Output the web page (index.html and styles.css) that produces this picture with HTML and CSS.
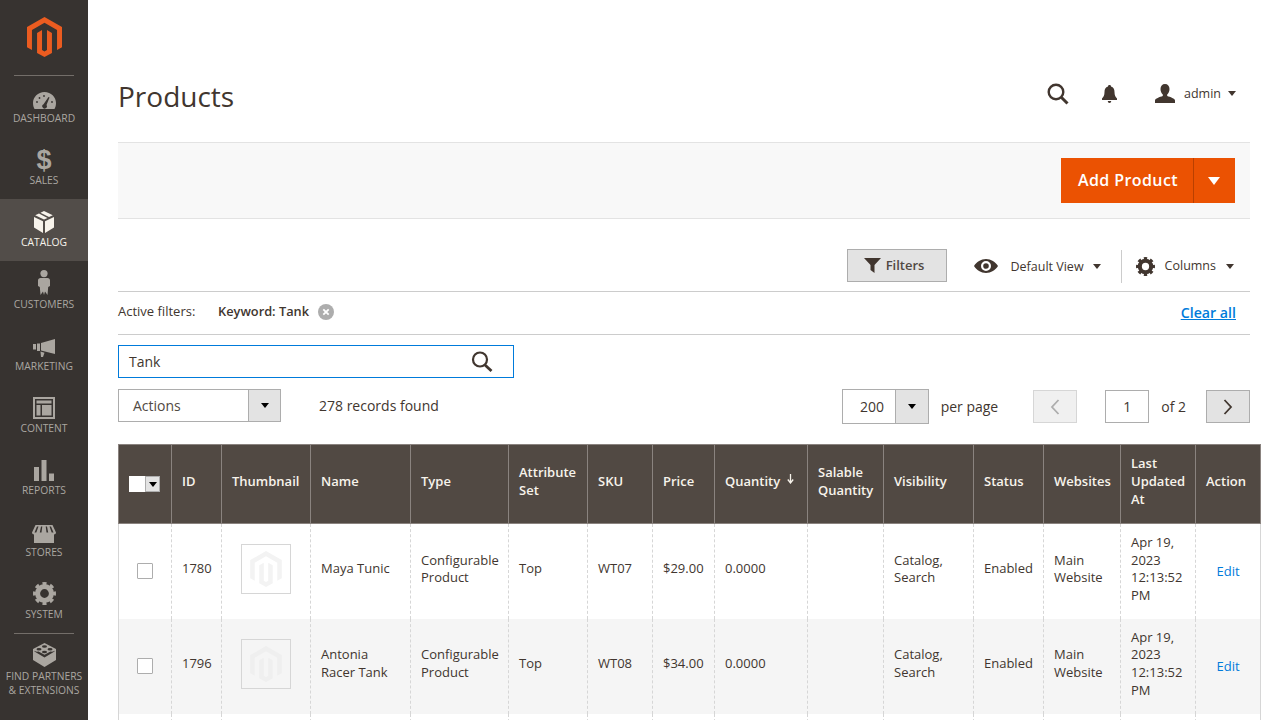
FILE: index.html
```html
<!DOCTYPE html>
<html lang="en">
<head>
    <meta charset="UTF-8">
    <title>Products</title>
    <link rel="stylesheet" href="styles.css">
</head>
<body>
    <div class="layout">
        <nav class="sidebar">
            <div class="logo">
                <svg width="35" height="40" viewBox="0 0 24 27.4"><path fill="#eb5c20" d="M12 0 0 6.9v13.8l3.4 1.9V8.9L12 4l8.6 4.9v13.7l3.4-1.9V6.9zM13.7 22.6l-1.7 1-1.7-1V8.9L6.9 10.9v13.7l5.1 2.8 5.1-2.8V10.9l-3.4-2z"/></svg>
            </div>
            <a class="nav-item">
                <svg class="nav-icon" width="23" height="17" viewBox="0 0 23 17"><path d="M11.5 0C5 0 0 5 0 11c0 2.2.5 4.2 1.5 6h20c1-1.8 1.500-3.800 1.500-6C23 5 18 0 11.500 0zM16.500 5.500l-3 7.500a2.300 2.300 0 1 1-3-.8l5-7.300z"/><circle cx="4" cy="10" r=".9" fill="#373330"/><circle cx="6.5" cy="6" r=".9" fill="#373330"/><circle cx="11" cy="4" r=".9" fill="#373330"/><circle cx="19" cy="10" r=".9" fill="#373330"/></svg>
                <span>Dashboard</span>
            </a>
            <a class="nav-item">
                <span class="nav-dollar">$</span>
                <span>Sales</span>
            </a>
            <a class="nav-item active">
                <svg class="nav-icon" width="20" height="22" viewBox="0 0 20 22"><path d="M10 0 6.5 1.700l8.500 4.400 3.800-1.900zM5 2.500 1.200 4.300l8.800 4.300 3.500-1.700zM0 6v10.500L9 22V10.300zM20 6l-9 4.300V22l9-5.500z"/></svg>
                <span>Catalog</span>
            </a>
            <a class="nav-item">
                <svg class="nav-icon" width="12" height="25" viewBox="0 0 12 25"><circle cx="6" cy="3.6" r="3.6"/><path d="M2.500 8h7C11 8 12 9 12 10.500V16l-1.800 1-.7 8-2.500-3.500L6 25l-1-3.500L2.500 25l-.7-8L0 16v-5.500C0 9 1 8 2.500 8z"/></svg>
                <span>Customers</span>
            </a>
            <a class="nav-item">
                <svg class="nav-icon" width="22" height="18" viewBox="0 0 22 18"><path d="M22 0v15L8 11.500V4zM0 5h3v5.500H0zM4 4.500h3v7.500H4zM7.500 12.500l4 1.200-1.500 4.300H8z"/></svg>
                <span>Marketing</span>
            </a>
            <a class="nav-item">
                <svg class="nav-icon" width="22" height="22" viewBox="0 0 22 22"><path fill-rule="evenodd" d="M0 0h22v22H0zM2 2v18h18V2zM3.500 3.500h15v3h-15zM3.500 8h4v10.500h-4zM9 8h9.500v10.500H9z"/></svg>
                <span>Content</span>
            </a>
            <a class="nav-item">
                <svg class="nav-icon" width="20" height="21" viewBox="0 0 20 21"><path d="M0 7h5v14H0zM7.500 0h5v21h-5zM15 13.500h5V21h-5z"/></svg>
                <span>Reports</span>
            </a>
            <a class="nav-item">
                <svg class="nav-icon" width="24" height="18" viewBox="0 0 24 18"><path d="M3.500 0h17L24 7.500c0 1.300-1 2-2 2v8.500H2V9.500c-1 0-2-.7-2-2zM5 1.500 2.500 7.500h1.800L6.500 1.500zM9 1.500 7.800 7.500h1.700l.8-6zM13.700 1.500l.8 6h1.700L15 1.500zM17.500 1.500l2.200 6h1.800L19 1.500z"/></svg>
                <span>Stores</span>
            </a>
            <a class="nav-item">
                <svg class="nav-icon gear" width="23" height="23" viewBox="-12 -12 24 24"><circle r="7.2" fill="none" stroke-width="5.2"/><circle r="10.2" fill="none" stroke-width="3.6" pathLength="8" stroke-dasharray=".52 .48" stroke-dashoffset=".26"/></svg>
                <span>System</span>
            </a>
            <a class="nav-item partners">
                <svg class="nav-icon" width="23" height="24" viewBox="0 0 23 24"><path d="M11.500 0 0 6v11l11.500 7L23 17V6zM11.500 14.500 1.500 8.500v-.8c1 .8 2.700 1.200 4 .8l6 3.300 6-3.300c1.300.4 3 0 4-.8v.8z"/><ellipse cx="11.5" cy="3.5" rx="2.5" ry="1.3" fill="#373330"/><ellipse cx="6" cy="6.3" rx="2.5" ry="1.3" fill="#373330"/><ellipse cx="17" cy="6.3" rx="2.5" ry="1.3" fill="#373330"/><ellipse cx="11.5" cy="9" rx="2.5" ry="1.3" fill="#373330"/></svg>
                <span>Find Partners &amp; Extensions</span>
            </a>
        </nav>

        <main class="main">
            <header class="page-header">
                <h1>Products</h1>
                <div class="header-tools">
                    <svg class="tool-search" width="22" height="22" viewBox="0 0 22 22"><circle cx="9" cy="9" r="7.3" fill="none" stroke="#41362f" stroke-width="2.4"/><path d="m14.500 14.500 6 6" stroke="#41362f" stroke-width="3"/></svg>
                    <svg class="tool-bell" width="15" height="18" viewBox="0 0 15 18"><path fill="#41362f" d="M7.500 0C8.500 0 9 .6 9 1.400 11.500 2 12.500 4 12.500 7c0 3.500 1 5 2.500 6.500V15H0v-1.500C1.500 12 2.500 10.500 2.500 7 2.500 4 3.500 2 6 1.400 6 .6 6.500 0 7.500 0zM5.800 16h3.400c0 1-.7 2-1.700 2s-1.700-1-1.700-2z"/></svg>
                    <div class="user-menu">
                        <svg width="20" height="19" viewBox="0 0 20 19"><path fill="#41362f" d="M10 0c2.800 0 4.500 2 4.500 5 0 2.500-1 4.500-2.300 5.500v1.500c3 1 7.800 2.500 7.800 4.500V19H0v-2.500c0-2 4.800-3.500 7.800-4.500v-1.500C6.500 9.500 5.500 7.500 5.500 5 5.500 2 7.200 0 10 0z"/></svg>
                        <span>admin</span>
                        <i class="caret"></i>
                    </div>
                </div>
            </header>

            <div class="page-actions">
                <div class="add-btn">
                    <span class="add-label">Add Product</span>
                    <span class="add-toggle"><i></i></span>
                </div>
            </div>

            <div class="grid-tools">
                <button class="filters-btn">
                    <svg width="17" height="15" viewBox="0 0 17 15"><path fill="#41362f" d="M0 0h17l-6.500 7v8l-4-3V7z"/></svg>
                    Filters
                </button>
                <div class="view-menu">
                    <svg width="24" height="14" viewBox="0 0 24 14"><path fill-rule="evenodd" fill="#41362f" d="M12 0c5 0 9.500 3 12 7-2.500 4-7 7-12 7S2.500 11 0 7c2.500-4 7-7 12-7zm0 2a5 5 0 1 0 0 10 5 5 0 0 0 0-10zm0 2.200a2.800 2.800 0 1 1 0 5.600 2.800 2.800 0 0 1 0-5.600z"/></svg>
                    <span>Default View</span>
                    <i class="caret small"></i>
                </div>
                <div class="columns-menu">
                    <svg class="gear dark" width="19" height="19" viewBox="-12 -12 24 24"><circle r="7.2" fill="none" stroke-width="5.2"/><circle r="10.2" fill="none" stroke-width="3.6" pathLength="8" stroke-dasharray=".52 .48" stroke-dashoffset=".26"/></svg>
                    <span>Columns</span>
                    <i class="caret small"></i>
                </div>
            </div>

            <div class="active-filters">
                <span class="af-label">Active filters:</span>
                <strong class="af-value">Keyword: Tank</strong>
                <svg class="af-remove" width="16" height="16" viewBox="0 0 16 16"><circle cx="8" cy="8" r="8" fill="#adadad"/><path d="m5.300 5.300 5.400 5.400m0-5.400-5.400 5.400" stroke="#fff" stroke-width="1.8"/></svg>
                <a class="clear-all">Clear all</a>
            </div>

            <div class="search-box">
                <span>Tank</span>
                <svg width="22" height="21" viewBox="0 0 22 21"><circle cx="9" cy="8.5" r="7" fill="none" stroke="#41362f" stroke-width="2.2"/><path d="m14 14 6.500 6" stroke="#41362f" stroke-width="2.8"/></svg>
            </div>

            <div class="list-bar">
                <div class="select actions-select">
                    <span class="select-value">Actions</span>
                    <span class="select-arrow"><i class="caret black"></i></span>
                </div>
                <span class="records">278 records found</span>
                <div class="pager">
                    <div class="select perpage-select">
                        <span class="select-value">200</span>
                        <span class="select-arrow"><i class="caret black"></i></span>
                    </div>
                    <span class="perpage-label">per page</span>
                    <button class="page-btn prev" disabled><svg width="10" height="16" viewBox="0 0 10 16"><path d="M8.500 1 2 8l6.500 7" fill="none" stroke="#adadad" stroke-width="1.8"/></svg></button>
                    <span class="page-input">1</span>
                    <span class="page-of">of 2</span>
                    <button class="page-btn next"><svg width="10" height="16" viewBox="0 0 10 16"><path d="M1.500 1 8 8l-6.500 7" fill="none" stroke="#41362f" stroke-width="1.8"/></svg></button>
                </div>
            </div>

            <table class="grid">
                <thead>
                    <tr>
                        <th class="c-check"><span class="mass-select"><span class="mass-box"></span><span class="mass-arrow"><i class="caret black"></i></span></span></th>
                        <th class="c-id">ID</th>
                        <th class="c-thumb">Thumbnail</th>
                        <th class="c-name">Name</th>
                        <th class="c-type">Type</th>
                        <th class="c-set">Attribute Set</th>
                        <th class="c-sku">SKU</th>
                        <th class="c-price">Price</th>
                        <th class="c-qty">Quantity <svg class="sort" width="7" height="10" viewBox="0 0 7 10"><path d="M3.500 0v8M.8 5.500l2.700 3.500 2.700-3.500" fill="none" stroke="#f7f3eb" stroke-width="1.3"/></svg></th>
                        <th class="c-salable">Salable Quantity</th>
                        <th class="c-vis">Visibility</th>
                        <th class="c-status">Status</th>
                        <th class="c-web">Websites</th>
                        <th class="c-date">Last Updated At</th>
                        <th class="c-action">Action</th>
                    </tr>
                </thead>
                <tbody>
                    <tr>
                        <td class="cell-check"><span class="checkbox"></span></td>
                        <td>1780</td>
                        <td class="cell-thumb"><span class="thumb"><svg width="32" height="36" viewBox="0 0 24 27.4"><path fill="#f3f3f3" d="M12 0 0 6.9v13.800l3.400 1.900V8.900L12 4l8.600 4.900v13.700l3.400-1.900V6.900zM13.700 22.600l-1.700 1-1.700-1V8.900L6.900 10.900v13.700l5.100 2.800 5.100-2.800V10.900l-3.400-2z"/></svg></span></td>
                        <td>Maya Tunic</td>
                        <td>Configurable Product</td>
                        <td>Top</td>
                        <td>WT07</td>
                        <td>$29.00</td>
                        <td>0.0000</td>
                        <td></td>
                        <td>Catalog, Search</td>
                        <td>Enabled</td>
                        <td>Main Website</td>
                        <td>Apr 19, 2023 12:13:52 PM</td>
                        <td class="cell-action"><a>Edit</a></td>
                    </tr>
                    <tr class="odd">
                        <td class="cell-check"><span class="checkbox"></span></td>
                        <td>1796</td>
                        <td class="cell-thumb"><span class="thumb"><svg width="32" height="36" viewBox="0 0 24 27.4"><path fill="#efefef" d="M12 0 0 6.9v13.800l3.400 1.900V8.900L12 4l8.600 4.900v13.700l3.400-1.900V6.900zM13.700 22.600l-1.700 1-1.700-1V8.900L6.900 10.900v13.700l5.100 2.800 5.100-2.800V10.900l-3.400-2z"/></svg></span></td>
                        <td>Antonia Racer Tank</td>
                        <td>Configurable Product</td>
                        <td>Top</td>
                        <td>WT08</td>
                        <td>$34.00</td>
                        <td>0.0000</td>
                        <td></td>
                        <td>Catalog, Search</td>
                        <td>Enabled</td>
                        <td>Main Website</td>
                        <td>Apr 19, 2023 12:13:52 PM</td>
                        <td class="cell-action"><a>Edit</a></td>
                    </tr>
                    <tr class="blank">
                        <td></td><td></td><td></td><td></td><td></td><td></td><td></td><td></td>
                        <td></td><td></td><td></td><td></td><td></td><td></td><td></td>
                    </tr>
                </tbody>
            </table>
        </main>
    </div>
</body>
</html>
```
FILE: styles.css
```css
html, body {
    height: 100%;
    overflow: hidden;
}
body {
    margin: 0;
    font-family: "Open Sans", sans-serif;
    font-size: 14px;
    color: #41362f;
    background-color: #fff;
}
i {
    display: inline-block;
}
.layout {
    display: flex;
    height: 720px;
}

/* sidebar */
.sidebar {
    flex: 0 0 88px;
    background-color: #373330;
    color: #aaa6a0;
}
.logo {
    height: 75px;
    box-sizing: border-box;
    padding-top: 17px;
    text-align: center;
    position: relative;
}
.logo::after, .partners::before {
    content: "";
    position: absolute;
    left: 14px;
    right: 14px;
    height: 1px;
    background-color: #736e69;
}
.logo::after {
    bottom: -1px;
}
.partners::before {
    top: 0;
}
.nav-item {
    position: relative;
    display: flex;
    flex-direction: column;
    align-items: center;
    justify-content: flex-end;
    height: 62px;
    box-sizing: border-box;
    padding-bottom: 12px;
    font-size: 10.3px;
    line-height: 14px;
    text-transform: uppercase;
    text-align: center;
}
.nav-icon {
    fill: #aaa6a0;
    margin-bottom: 2px;
}
.gear circle {
    stroke: #aaa6a0;
}
.gear.dark circle {
    stroke: #41362f;
}
.nav-dollar {
    font-family: "Liberation Sans", sans-serif;
    font-size: 27px;
    font-weight: bold;
    line-height: 26px;
}
.nav-item.active {
    background-color: #524d49;
    color: #f7f3eb;
}
.active .nav-icon {
    fill: #f7f3eb;
}
.partners {
    height: 67px;
    justify-content: flex-start;
    padding: 10px 5px 0;
}

/* top of page */
.main {
    flex: 1;
    min-width: 0;
    padding: 0 30px;
}
.page-header {
    display: flex;
    align-items: center;
    justify-content: space-between;
    height: 142px;
    padding-top: 52px;
    box-sizing: border-box;
}
h1 {
    margin: -2px 0 0;
    font-size: 28px;
    font-weight: 400;
    color: #41362f;
}
.header-tools {
    display: flex;
    align-items: center;
    margin: 0 14px 6px 0;
}
.tool-bell {
    margin-left: 33px;
}
.user-menu {
    display: flex;
    align-items: center;
    margin: -2px 0 0 38px;
    font-size: 12.5px;
    color: #41362f;
}
.user-menu span {
    margin: 0 7px 0 9px;
}
.caret {
    width: 0;
    height: 0;
    border-left: 4.5px solid transparent;
    border-right: 4.5px solid transparent;
    border-top: 5px solid #41362f;
}
.caret.small {
    border-left-width: 4px;
    border-right-width: 4px;
}
.caret.black {
    border-top-color: #000;
}
.page-actions {
    display: flex;
    justify-content: flex-end;
    padding: 15px;
    background-color: #f8f8f8;
    border-top: 1px solid #e3e3e3;
    border-bottom: 1px solid #e3e3e3;
}
.add-btn {
    display: flex;
    height: 45px;
    background-color: #eb5202;
    color: #fff;
    font-size: 16px;
    font-weight: 600;
    line-height: 45px;
}
.add-label {
    width: 115px;
    padding-left: 17px;
    letter-spacing: .4px;
    white-space: nowrap;
}
.add-toggle {
    display: flex;
    align-items: center;
    justify-content: center;
    width: 39px;
    padding-right: 2px;
    border-left: 1px solid #ba4000;
}
.add-toggle i {
    border-left: 6px solid transparent;
    border-right: 6px solid transparent;
    border-top: 8px solid #fff;
}

/* grid toolbar */
.grid-tools {
    display: flex;
    align-items: center;
    justify-content: flex-end;
    height: 73px;
    padding: 22px 16px 0 0;
    box-sizing: border-box;
    border-bottom: 1px solid #ccc;
    font-size: 12.5px;
}
.filters-btn {
    display: flex;
    align-items: center;
    justify-content: center;
    gap: 5px;
    width: 100px;
    height: 33px;
    margin-top: -2px;
    padding: 0 5px 0 0;
    background-color: #e3e3e3;
    border: 1px solid #adadad;
    font-family: inherit;
    font-size: 13px;
    font-weight: 600;
    color: #514943;
}
.view-menu, .columns-menu {
    display: flex;
    align-items: center;
}
.view-menu {
    margin-left: 27px;
    padding-right: 20px;
    height: 33px;
}
.view-menu span {
    margin: 0 9px 0 13px;
}
.columns-menu {
    height: 33px;
    padding-left: 14px;
    border-left: 1px solid #ccc;
}
.columns-menu span {
    margin: -2px 10px 0 10px;
}
.active-filters {
    display: flex;
    align-items: center;
    height: 40px;
    border-bottom: 1px solid #ccc;
    font-size: 13px;
    padding: 0 14px 2px 0;
}
.af-label {
    width: 100px;
    margin-top: -2px;
}
.af-value {
    margin: -2px 9px 0 0;
    font-size: 12.8px;
    font-weight: 600;
    color: #41362f;
}
.clear-all {
    margin-left: auto;
    color: #007bdb;
    font-size: 14.2px;
    font-weight: 600;
    text-decoration: underline;
}
.search-box {
    display: flex;
    align-items: center;
    justify-content: space-between;
    width: 396px;
    height: 33px;
    box-sizing: border-box;
    margin-top: 10px;
    padding: 0 20px 0 10px;
    border: 1px solid #007bdb;
    font-size: 14px;
}
.list-bar {
    display: flex;
    align-items: center;
    height: 35px;
    margin-top: 11px;
}
.select {
    display: flex;
    box-sizing: border-box;
    border: 1px solid #adadad;
    background-color: #fff;
}
.select-value {
    flex: 1;
}
.select-arrow {
    display: flex;
    align-items: center;
    justify-content: center;
    width: 32px;
    box-sizing: border-box;
    background-color: #e3e3e3;
    border-left: 1px solid #adadad;
}
.actions-select {
    width: 163px;
    height: 33px;
    margin-top: -2px;
    line-height: 31px;
    color: #514943;
}
.actions-select .select-value {
    padding-left: 14px;
}
.records {
    margin-left: 38px;
    margin-top: -2px;
}
.pager {
    display: flex;
    align-items: center;
    margin-left: auto;
}
.perpage-select {
    width: 87px;
    height: 35px;
    line-height: 33px;
}
.perpage-select .select-value {
    text-align: center;
    padding-left: 7px;
}
.perpage-select .select-arrow {
    width: 33px;
}
.perpage-label {
    margin: 0 35px 0 12px;
}
.page-btn {
    display: flex;
    align-items: center;
    justify-content: center;
    width: 44px;
    height: 33px;
    padding: 0;
    background-color: #e3e3e3;
    border: 1px solid #adadad;
}
.page-btn.prev {
    background-color: #f0f0f0;
    border-color: #d6d6d6;
}
.page-input {
    width: 44px;
    height: 33px;
    box-sizing: border-box;
    margin-left: 28px;
    border: 1px solid #adadad;
    line-height: 31px;
    text-align: center;
}
.page-of {
    margin: 0 20px 0 12px;
}

/* product table */
.grid {
    width: 1142px;
    margin-top: 20px;
    table-layout: fixed;
    border-collapse: collapse;
    font-size: 13px;
    line-height: 17.7px;
}
.grid th {
    height: 79px;
    box-sizing: border-box;
    padding: 0 10px 4px;
    background-color: #514943;
    border: 1px solid #8a837f;
    color: #f7f3eb;
    font-weight: 600;
    text-align: left;
}
.grid .c-check {
    padding-bottom: 0;
}
.grid td {
    height: 95px;
    box-sizing: border-box;
    padding: 0 10px 4px;
    border-left: 1px dashed #d6d6d6;
    border-right: 1px dashed #d6d6d6;
    color: #41362f;
}
.grid td:first-child {
    border-left: 1px solid #d6d6d6;
}
.grid td:last-child {
    border-right: 1px solid #d6d6d6;
}
.odd td {
    background-color: #f5f5f5;
}
.c-check { width: 53px; }
.c-id { width: 50px; }
.c-thumb { width: 89px; }
.c-name { width: 100px; }
.c-type { width: 98px; }
.c-set { width: 79px; }
.c-sku { width: 65px; }
.c-price { width: 62px; }
.c-qty { width: 93px; }
.c-salable { width: 76px; }
.c-vis { width: 90px; }
.c-status { width: 70px; }
.c-web { width: 77px; }
.c-date { width: 75px; }
.c-action { width: 65px; }
.sort {
    margin-left: 3px;
    vertical-align: 2px;
}
.mass-select {
    display: flex;
    width: 31px;
    height: 16px;
    background-color: #fff;
}
.mass-box {
    flex: 1;
}
.mass-arrow {
    display: flex;
    align-items: center;
    justify-content: center;
    width: 15px;
    background-color: #e3e3e3;
    border: 1px solid #adadad;
    box-sizing: border-box;
}
.mass-arrow .caret {
    border-left-width: 4px;
    border-right-width: 4px;
}
.cell-check {
    text-align: center;
}
.checkbox {
    display: inline-block;
    width: 16px;
    height: 16px;
    box-sizing: border-box;
    margin-top: 4px;
    background-color: #fff;
    border: 1px solid #adadad;
    border-radius: 1px;
    vertical-align: middle;
}
.cell-thumb {
    text-align: center;
}
.thumb {
    display: inline-flex;
    align-items: center;
    justify-content: center;
    width: 50px;
    height: 50px;
    box-sizing: border-box;
    border: 1px solid #d6d6d6;
    vertical-align: middle;
}
.grid .cell-action {
    padding: 2px 10px 0;
    text-align: center;
}
.cell-action a {
    color: #007bdb;
}
```
